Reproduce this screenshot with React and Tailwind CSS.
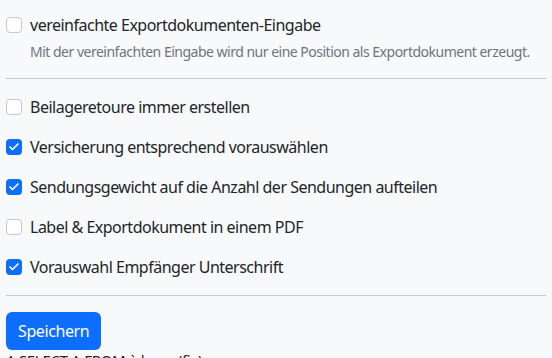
import { Check } from "lucide-react";

const options = [
  { label: "Beilageretoure immer erstellen", checked: false },
  { label: "Versicherung entsprechend vorauswählen", checked: true },
  { label: "Sendungsgewicht auf die Anzahl der Sendungen aufteilen", checked: true },
  { label: "Label & Exportdokument in einem PDF", checked: false },
  { label: "Vorauswahl Empfänger Unterschrift", checked: true },
];

function Box({ checked }) {
  return checked ? (
    <span className="mt-1 flex h-4 w-4 shrink-0 items-center justify-center rounded-[4px] bg-[#0d6efd]">
      <Check className="h-3 w-3 text-white" strokeWidth={3.5} />
    </span>
  ) : (
    <span className="mt-1 h-4 w-4 shrink-0 rounded-[4px] border border-[#c4c6c8] bg-white" />
  );
}

function Row({ label, checked }) {
  return (
    <label className="flex gap-2 leading-6 tracking-[-0.5px]">
      <Box checked={checked} />
      <span>{label}</span>
    </label>
  );
}

export default function App() {
  return (
    <div
      className="h-[358px] overflow-hidden bg-[#f8f9fa] px-[6px] pt-[13px] text-[16px] text-[#212529]"
      style={{ fontFamily: '"Noto Sans", "Open Sans", sans-serif' }}
    >
      <Row label="vereinfachte Exportdokumenten-Eingabe" checked={false} />
      <p className="mt-1 whitespace-nowrap pl-6 text-[14px] leading-[21px] tracking-[-0.5px] text-[#6c757d]">
        Mit der vereinfachten Eingabe wird nur eine Position als Exportdokument erzeugt.
      </p>

      <div className="my-4 h-px bg-[#c8c9ca]" />

      <div className="flex flex-col gap-4">
        {options.map((o) => (
          <Row key={o.label} label={o.label} checked={o.checked} />
        ))}
      </div>

      <div className="my-4 h-px bg-[#c8c9ca]" />

      <button className="rounded-md bg-[#0d6efd] px-3 py-[7px] leading-6 tracking-[-0.4px] text-white">
        Speichern
      </button>
      <p className="-mt-[2px] text-[15px] leading-6 tracking-[-0.3px]">A SELECT A FROM à les ... (fix)</p>
    </div>
  );
}
